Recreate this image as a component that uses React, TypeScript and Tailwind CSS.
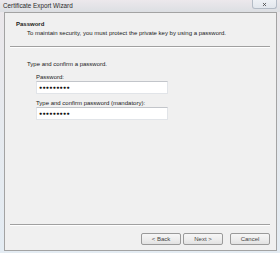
import { X } from 'lucide-react';

function Separator({ className = '' }: { className?: string }) {
  return <div className={`h-[2px] border-t border-[#a0a0a0] border-b border-b-white ${className}`} />;
}

function PasswordField({ label }: { label: string }) {
  return (
    <div className="flex flex-col">
      <div className="leading-[8px]">{label}</div>
      <div className="flex h-[13px] w-[132px] items-center border border-[#e1e4e8] border-t-[#c2c5ca] bg-white pl-[2px] text-[5.2px] leading-none tracking-[0.3px] text-[#111]">
        ●●●●●●●●●
      </div>
    </div>
  );
}

function Button({ children, className = '' }: { children: string; className?: string }) {
  return (
    <button
      type="button"
      className={`flex h-[12px] w-[40px] items-center justify-center rounded-[2px] border border-[#9a9a9a] bg-gradient-to-b from-[#f6f6f6] via-[#eeeeee] to-[#e2e2e2] text-[6px] leading-none text-[#444] ${className}`}
    >
      {children}
    </button>
  );
}

export default function App() {
  return (
    <div className="flex h-[253px] w-[280px] flex-col overflow-hidden bg-gradient-to-b from-[#ebe7ea] via-[#e6eaef] to-[#e4ecf3] font-['Liberation_Sans',Arial,sans-serif] text-[6px] text-[#1a1a1a]">
      {/* title bar */}
      <div className="flex h-[12px] shrink-0 items-start bg-gradient-to-b from-[#ece8ec] to-[#dcdfe3]">
        <div className="pl-[3px] pt-[3px] text-[6.3px] leading-[6px] text-[#2a2a2a]">Certificate Export Wizard</div>
        <div className="ml-auto mr-[3px] flex h-[9px] w-[25px] items-center justify-center rounded-b-[3px] border border-t-0 border-[#b4bcc6] bg-gradient-to-b from-[#eef1f5] to-[#e2e7ed]">
          <X className="h-[5px] w-[5px] text-[#4a4a4a]" strokeWidth={4} />
        </div>
      </div>

      {/* client area */}
      <div className="mb-[2px] ml-[4px] mr-[3px] flex flex-1 flex-col border border-[#a3a3a3] bg-[#f0f0f0]">
        <div className="h-[33px] shrink-0 pl-[11px] pt-[7px] leading-[9px]">
          <div className="font-bold">Password</div>
          <div className="pl-[11px]">To maintain security, you must protect the private key by using a password.</div>
        </div>
        <Separator className="ml-[5px] mr-[6px]" />

        <div className="flex flex-1 flex-col pl-[22px] pt-[12px]">
          <div className="leading-[9px]">Type and confirm a password.</div>
          <div className="flex flex-col gap-[5px] pl-[9px] pt-[4px]">
            <PasswordField label="Password:" />
            <PasswordField label="Type and confirm password (mandatory):" />
          </div>
        </div>

        <Separator className="ml-[5px] mr-[6px]" />
        <div className="flex justify-end pb-[5px] pr-[6px] pt-[7px]">
          <Button>&lt; Back</Button>
          <Button className="ml-[2px]">Next &gt;</Button>
          <Button className="ml-[7px]">Cancel</Button>
        </div>
      </div>
    </div>
  );
}
